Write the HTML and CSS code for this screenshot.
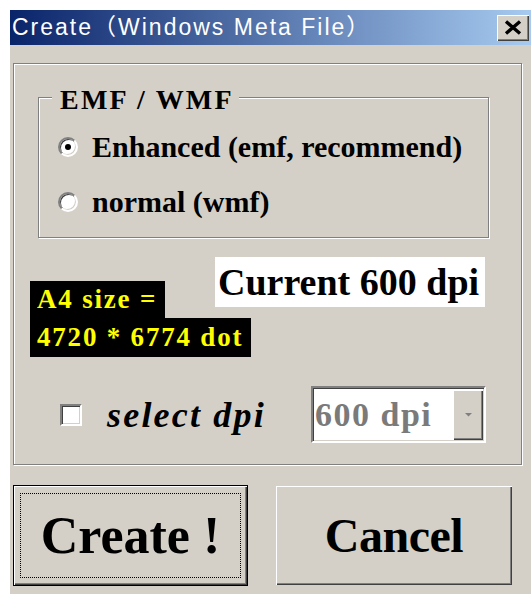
FILE: index.html
```html
<!DOCTYPE html>
<html lang="en">
<head>
<meta charset="utf-8">
<title>Create (Windows Meta File)</title>
<link rel="stylesheet" href="styles.css">
</head>
<body>
<div class="window">
  <div class="titlebar">
    <span class="title">Create（Windows Meta File）</span>
    <button class="close" type="button" aria-label="Close">
      <svg width="18" height="15" viewBox="0 0 18 15"><path d="M2 1.5 L16 13.5 M16 1.5 L2 13.5" stroke="#000" stroke-width="3.4" fill="none"/></svg>
    </button>
  </div>
  <div class="client">
    <div class="panel">
      <div class="group">
        <span class="legend">EMF / WMF</span>
        <label class="option"><span class="radio checked"></span>Enhanced (emf, recommend)</label>
        <label class="option"><span class="radio"></span>normal (wmf)</label>
      </div>
      <div class="current">Current 600 dpi</div>
      <div class="size">
        <div class="size-line">A4 size =</div>
        <div class="size-line second">4720 * 6774 dot</div>
      </div>
      <div class="dpi-row">
        <span class="check"></span>
        <span class="dpi-label">select dpi</span>
        <div class="combo">
          <span class="combo-text">600 dpi</span>
          <span class="combo-btn"><svg width="9" height="6" viewBox="0 0 9 6"><path d="M1 1 H8 L4.5 4.5 Z" fill="#808080"/></svg></span>
        </div>
      </div>
    </div>
    <div class="buttons">
      <button class="btn btn-create" type="button"><span class="focus">Create !</span></button>
      <button class="btn btn-cancel" type="button">Cancel</button>
    </div>
  </div>
</div>
</body>
</html>
```

FILE: styles.css
```css
body {
  margin: 0;
  background: #fff;
  font-family: "Liberation Serif", serif;
}

.window {
  margin: 10px 0 0 10px;
  width: 521px;
  height: 584px;
  background: #d4d0c8;
  display: flex;
  flex-direction: column;
  overflow: hidden;
}

/* caption bar */
.titlebar {
  flex: none;
  height: 35px;
  display: flex;
  align-items: center;
  justify-content: space-between;
  padding-left: 2px;
  background: linear-gradient(to right, #0a246a, #a6caf0);
}

.title {
  color: #fff;
  font-family: "Liberation Sans", "Noto Sans CJK JP", sans-serif;
  font-size: 23px;
  line-height: 35px;
  letter-spacing: 2px;
  white-space: nowrap;
}

.close {
  width: 32px;
  height: 26px;
  margin-right: 2px;
  padding: 0;
  border: 0;
  background: #d4d0c8;
  box-shadow: inset 1px 1px #fff, inset -1px -1px #404040, inset -2px -2px #808080;
  display: flex;
  align-items: center;
  justify-content: center;
}

.client {
  flex: 1;
  display: flex;
  flex-direction: column;
}

/* etched frame around the options */
.panel {
  box-sizing: border-box;
  margin: 18px 9px 0 3px;
  height: 402px;
  border: 1px solid #808080;
  box-shadow: inset 1px 1px #fff, 1px 1px #fff;
  display: flex;
  flex-direction: column;
  align-items: flex-start;
}

.group {
  position: relative;
  box-sizing: border-box;
  margin: 33px 0 0 24px;
  width: 451px;
  height: 141px;
  border: 1px solid #808080;
  box-shadow: inset 1px 1px #fff, 1px 1px #fff;
  padding: 34px 0 0 19px;
  display: flex;
  flex-direction: column;
  gap: 25px;
}

.legend {
  position: absolute;
  left: 13px;
  top: -12px;
  padding: 0 5px 0 8px;
  background: #d4d0c8;
  font-size: 28px;
  font-weight: bold;
  line-height: 28px;
  letter-spacing: 2.2px;
  white-space: nowrap;
}

.option {
  display: flex;
  align-items: center;
  height: 30px;
  font-size: 30px;
  font-weight: bold;
  line-height: 30px;
  white-space: nowrap;
}

.radio {
  box-sizing: border-box;
  width: 20px;
  height: 20px;
  margin-right: 14px;
  border-radius: 50%;
  border: 2px solid;
  border-color: #808080 #fff #fff #808080;
  box-shadow: inset 1px 1px #404040, inset -1px -1px #d4d0c8;
  background: #fff;
  display: flex;
  align-items: center;
  justify-content: center;
}

.radio.checked::after {
  content: "";
  width: 6px;
  height: 6px;
  border-radius: 50%;
  background: #000;
}

/* resolution labels */
.current {
  box-sizing: border-box;
  margin: 19px 0 0 201px;
  width: 270px;
  height: 50px;
  padding-left: 3px;
  background: #fff;
  font-size: 38px;
  font-weight: bold;
  line-height: 50px;
  white-space: nowrap;
}

.size {
  margin: -26px 0 0 16px;
  color: #ff0;
  font-size: 27px;
  font-weight: bold;
  letter-spacing: 1.8px;
}

.size-line {
  width: fit-content;
  padding: 0 8px 0 7px;
  background: #000;
  line-height: 37px;
  white-space: nowrap;
}

.size-line.second {
  line-height: 39px;
}

/* dpi selector row */
.dpi-row {
  align-self: stretch;
  display: flex;
  align-items: center;
  height: 57px;
  margin-top: 29px;
}

.check {
  box-sizing: border-box;
  width: 22px;
  height: 22px;
  margin-left: 46px;
  border: 2px solid;
  border-color: #808080 #fff #fff #808080;
  box-shadow: inset 1px 1px #404040, inset -1px -1px #d4d0c8;
  background: #fff;
}

.dpi-label {
  margin-left: 25px;
  font-size: 36px;
  font-weight: bold;
  font-style: italic;
  letter-spacing: 2.2px;
  white-space: nowrap;
}

.combo {
  box-sizing: border-box;
  width: 175px;
  height: 57px;
  margin: 0 35px 0 auto;
  border: 2px solid;
  border-color: #808080 #fff #fff #808080;
  box-shadow: inset 1px 1px #404040, inset -1px -1px #d4d0c8;
  background: #fff;
  display: flex;
}

.combo-text {
  flex: 1;
  display: flex;
  align-items: center;
  padding-left: 2px;
  color: #7a7a7a;
  font-size: 34px;
  font-weight: bold;
  letter-spacing: 1.5px;
  white-space: nowrap;
}

.combo-btn {
  width: 30px;
  margin: 2px 1px 1px 0;
  background: #d4d0c8;
  box-shadow: inset 1px 1px #fff, inset -1px -1px #404040, inset -2px -2px #808080;
  display: flex;
  align-items: center;
  justify-content: center;
}

/* push buttons */
.buttons {
  display: flex;
  align-items: flex-start;
  gap: 28px;
  margin: 20px 0 0 3px;
}

.btn {
  box-sizing: border-box;
  padding: 0;
  border: 0;
  background: #d4d0c8;
  color: #000;
  font-family: "Liberation Serif", serif;
  font-weight: bold;
  line-height: normal;
  box-shadow: inset 1px 1px #fff, inset -1px -1px #404040, inset -2px -2px #808080;
  display: flex;
  align-items: center;
  justify-content: center;
}

.btn-create {
  width: 235px;
  height: 101px;
  border: 1px solid #000;
  padding: 7px 6px;
  font-size: 52px;
}

.focus {
  flex: 1;
  align-self: stretch;
  display: flex;
  align-items: center;
  justify-content: center;
  border: 1px dotted #000;
}

.btn-cancel {
  width: 236px;
  height: 99px;
  margin-top: 1px;
  font-size: 48px;
  letter-spacing: -0.5px;
}
```
